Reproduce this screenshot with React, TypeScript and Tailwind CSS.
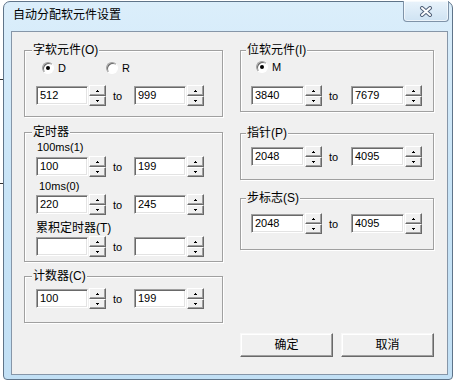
import React from "react";

const FONT = "font-['Liberation_Sans','Noto_Sans_CJK_SC',sans-serif]";

const Arrow = ({ up }: { up?: boolean }) => (
  <svg width="3" height="2" viewBox="0 0 3 2" shapeRendering="crispEdges">
    {up ? (
      <>
        <rect x="1" y="0" width="1" height="1" fill="#000" />
        <rect x="0" y="1" width="3" height="1" fill="#000" />
      </>
    ) : (
      <>
        <rect x="0" y="0" width="3" height="1" fill="#000" />
        <rect x="1" y="1" width="1" height="1" fill="#000" />
      </>
    )}
  </svg>
);

const SpinBtn = ({ up }: { up?: boolean }) => (
  <div
    className={`flex items-center justify-center bg-[#f0f0f0] border border-t-white border-l-white border-r-[#696969] border-b-[#696969] shadow-[inset_-1px_-1px_0_#a0a0a0] ${
      up ? "h-[11px]" : "h-[10px]"
    }`}
  >
    <Arrow up={up} />
  </div>
);

const Spin = () => (
  <div className="flex flex-col w-[17px] h-[21px] ml-[1px]">
    <SpinBtn up />
    <SpinBtn />
  </div>
);

const Edit = ({ v, wide }: { v: string; wide?: boolean }) => (
  <div
    className={`${
      wide ? "w-[53px]" : "w-[52px]"
    } h-[19px] bg-white border border-t-[#a0a0a0] border-l-[#a0a0a0] border-r-white border-b-white shadow-[inset_1px_1px_0_#696969,inset_-1px_-1px_0_#e3e3e3] pl-[3px] text-[11px] leading-[17px] text-black`}
  >
    {v}
  </div>
);

const RangeRow = ({ a, b, right }: { a: string; b: string; right?: boolean }) => (
  <div className={`flex items-center h-[21px] ${right ? "pl-[10px]" : "pl-[11px]"}`}>
    <Edit v={a} wide={right} />
    <Spin />
    <span className={`${right ? "w-[29px]" : "w-[28px]"} pl-[7px] text-[11px] leading-[12px]`}>to</span>
    <Edit v={b} wide={right} />
    <Spin />
  </div>
);

const Radio = ({ checked }: { checked?: boolean }) => (
  <div className="w-[12px] h-[12px] rounded-full bg-white border border-t-[#a0a0a0] border-l-[#a0a0a0] border-r-white border-b-white shadow-[inset_1px_1px_0_#696969] flex items-center justify-center">
    {checked && <div className="w-[4px] h-[4px] rounded-full bg-black" />}
  </div>
);

const Group = ({
  title,
  right,
  className,
  children,
}: {
  title: string;
  right?: boolean;
  className?: string;
  children: React.ReactNode;
}) => (
  <fieldset
    className={`min-w-0 border border-[#a0a0a0] shadow-[1px_1px_0_#ffffff,inset_1px_1px_0_#ffffff] ${className ?? ""}`}
  >
    <legend
      className={`${right ? "ml-[5px]" : "ml-[7px]"} px-[1px] bg-[#f0f0f0] text-[12px] leading-[14px] text-black`}
    >
      {title}
    </legend>
    {children}
  </fieldset>
);

const Btn = ({ label }: { label: string }) => (
  <button className="w-[93px] h-[24px] bg-[#f0f0f0] border border-t-[#f8f8f8] border-l-[#f8f8f8] border-r-[#696969] border-b-[#696969] shadow-[inset_-1px_-1px_0_#a0a0a0,inset_1px_1px_0_#ffffff] text-[12px] leading-[14px] text-black">
    {label}
  </button>
);

export default function App() {
  return (
    <div className={`relative w-[454px] h-[382px] bg-white overflow-hidden pt-[1px] pl-[3px] ${FONT}`}>
      <div className="absolute left-0 top-[79px] w-[3px] h-[1px] bg-[#333]" />
      <div className="absolute left-0 top-[183px] w-[3px] h-[1px] bg-[#333]" />

      <div className="w-[450px] h-[379px] flex flex-col border border-[#5f7489] rounded-t-[7px] rounded-b-[4px] bg-gradient-to-b from-[#dbeefb] via-[#c8e4f7] to-[#c2e0f5] pl-[7px] pr-[4px] pb-[4px]">
        {/* title bar */}
        <div className="flex h-[29px]">
          <div className="pl-[2px] pt-[6px] text-[12px] leading-[14px] text-black">自动分配软元件设置</div>
          <div className="flex-1" />
          <div className="mt-[-1px] mr-[-1px] w-[46px] h-[21px] rounded-b-[4px] border border-t-0 border-[#7f93a8] bg-gradient-to-b from-[#e9f3fb] to-[#cfe3f3] shadow-[inset_0_0_0_1px_rgba(255,255,255,0.6)] flex items-center justify-center">
            <svg width="14" height="11" viewBox="0 0 14 11">
              <path d="M3 2 L11 9 M11 2 L3 9" stroke="#52627a" strokeWidth="4" strokeLinecap="round" />
              <path d="M3 2 L11 9 M11 2 L3 9" stroke="#ffffff" strokeWidth="2" strokeLinecap="round" />
            </svg>
          </div>
        </div>

        {/* client */}
        <div className="flex-1 flex bg-[#f0f0f0] border border-[#8696a8] pt-[11px] pl-[12px] pb-[17px]">
          {/* left column */}
          <div className="w-[199px] flex flex-col">
            <Group title="字软元件(O)" className="pb-[10px]">
              <div className="flex items-center h-[14px] mt-[4px] ml-[17px] text-[11px]">
                <div className="flex items-center w-[64px]">
                  <Radio checked />
                  <span className="ml-[4px]">D</span>
                </div>
                <div className="flex items-center">
                  <Radio />
                  <span className="ml-[4px]">R</span>
                </div>
              </div>
              <div className="mt-[10px]">
                <RangeRow a="512" b="999" />
              </div>
            </Group>

            <Group title="定时器" className="mt-[8px] pb-[4px]">
              <div className="mt-[2px] ml-[12px] text-[11px] leading-[12px]">100ms(1)</div>
              <div className="mt-[3px]">
                <RangeRow a="100" b="199" />
              </div>
              <div className="mt-[3px] ml-[14px] text-[11px] leading-[12px]">10ms(0)</div>
              <div className="mt-[2px]">
                <RangeRow a="220" b="245" />
              </div>
              <div className="mt-[6px] ml-[11px] text-[12px] leading-[14px]">累积定时器(T)</div>
              <div className="mt-[1px]">
                <RangeRow a="" b="" />
              </div>
            </Group>

            <Group title="计数器(C)" className="mt-[7px] pb-[13px]">
              <div className="mt-[5px]">
                <RangeRow a="100" b="199" />
              </div>
            </Group>
          </div>

          {/* right column */}
          <div className="w-[194px] ml-[17px] flex flex-col">
            <Group title="位软元件(I)" right className="pb-[5px]">
              <div className="flex items-center h-[14px] mt-[3px] ml-[15px] text-[11px]">
                <Radio checked />
                <span className="ml-[4px]">M</span>
              </div>
              <div className="mt-[11px]">
                <RangeRow a="3840" b="7679" right />
              </div>
            </Group>

            <Group title="指针(P)" right className="mt-[14px] pb-[12px]">
              <div className="mt-[6px]">
                <RangeRow a="2048" b="4095" right />
              </div>
            </Group>

            <Group title="步标志(S)" right className="mt-[11px] pb-[15px]">
              <div className="mt-[8px]">
                <RangeRow a="2048" b="4095" right />
              </div>
            </Group>

            <div className="mt-auto flex gap-[8px]">
              <Btn label="确定" />
              <Btn label="取消" />
            </div>
          </div>
        </div>
      </div>
    </div>
  );
}
